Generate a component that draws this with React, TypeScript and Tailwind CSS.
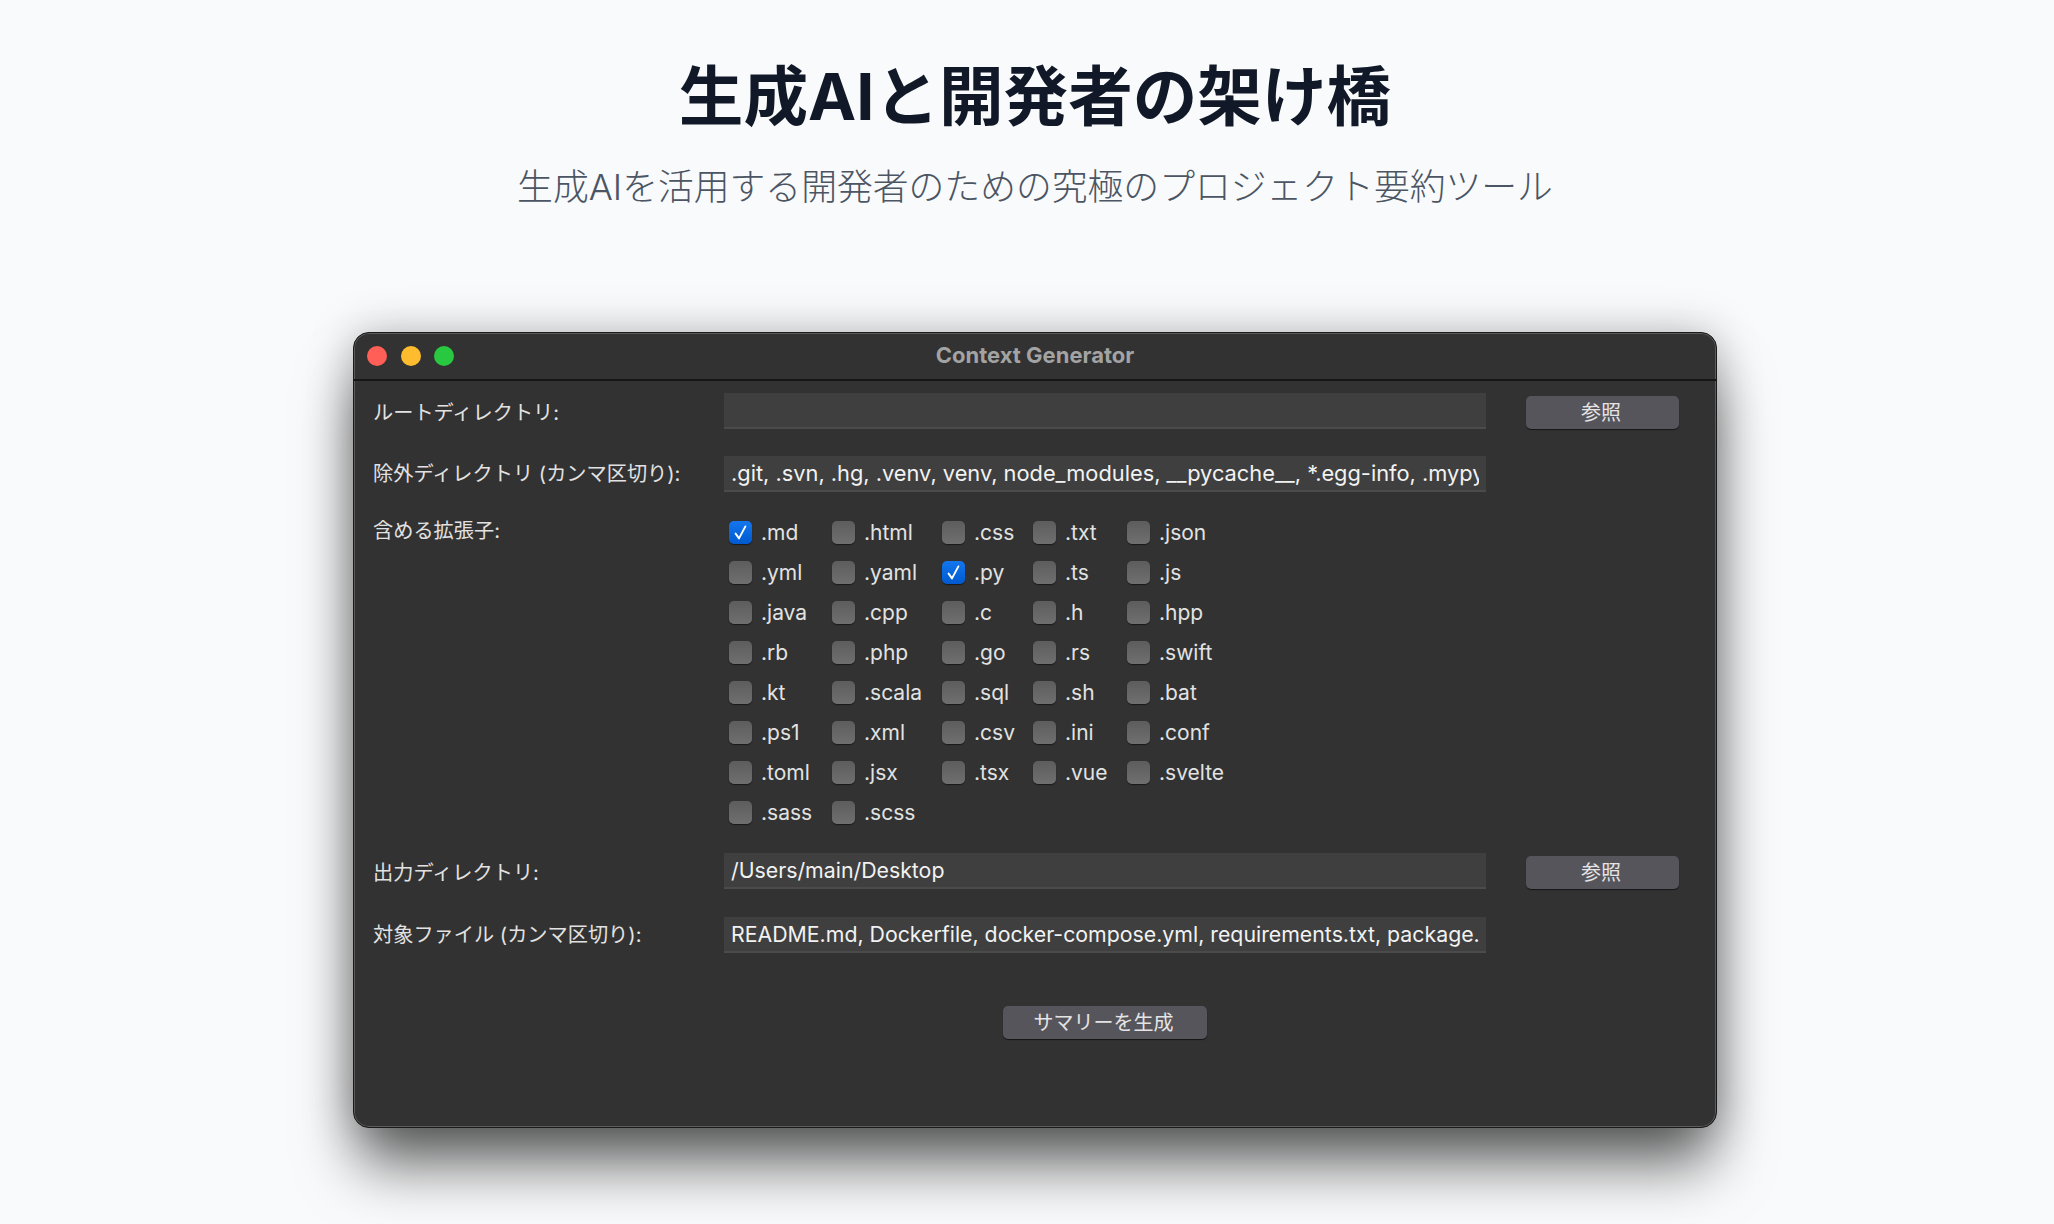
import React from "react";

const rows: string[][] = [
  [".md", ".html", ".css", ".txt", ".json"],
  [".yml", ".yaml", ".py", ".ts", ".js"],
  [".java", ".cpp", ".c", ".h", ".hpp"],
  [".rb", ".php", ".go", ".rs", ".swift"],
  [".kt", ".scala", ".sql", ".sh", ".bat"],
  [".ps1", ".xml", ".csv", ".ini", ".conf"],
  [".toml", ".jsx", ".tsx", ".vue", ".svelte"],
  [".sass", ".scss"],
];
const checked = new Set([".md", ".py"]);

function Check({ label }: { label: string }) {
  const on = checked.has(label);
  return (
    <div className="flex items-center gap-[9px]">
      {on ? (
        <span className="flex h-[23px] w-[23px] items-center justify-center rounded-[5px] bg-gradient-to-b from-[#1477ee] to-[#0059cf] shadow-[0_1px_1px_rgba(0,0,0,0.5)]">
          <svg width="15" height="17" viewBox="0 0 15 17" fill="none">
            <path d="M2.6 9.6 L6 14.4 L12.4 2.4" stroke="white" strokeWidth="1.9" strokeLinecap="round" strokeLinejoin="round" />
          </svg>
        </span>
      ) : (
        <span className="h-[23px] w-[23px] rounded-[5px] bg-gradient-to-b from-[#5d5d5d] to-[#6f6f6f] shadow-[0_1px_1px_rgba(0,0,0,0.5)]" />
      )}
      <span className="pt-px text-[21px] leading-none text-[#e2e2e2]">{label}</span>
    </div>
  );
}

function Field({ value, wide }: { value: string; wide?: boolean }) {
  return (
    <input
      readOnly
      value={value}
      className={
        wide
          ? "h-9 w-[762px] border-b-2 border-[#4b4b4b] bg-[#3f3f3f] px-[7px] pb-px text-[21.8px] text-[#f2f2f2] outline-none"
          : "h-9 w-[762px] border-b-2 border-[#4b4b4b] bg-[#3f3f3f] px-[7px] pb-px text-[21.3px] text-[#f2f2f2] outline-none"
      }
    />
  );
}

function Browse() {
  return (
    <button className="mt-[3px] h-[33px] w-[153px] rounded-[5px] bg-[#57555c] pr-[3px] text-[20px] leading-none text-[#e4e4e4] shadow-[0_1px_1px_rgba(0,0,0,0.6)]">
      参照
    </button>
  );
}

export default function App() {
  return (
    <div className="flex h-[1224px] flex-col items-center overflow-hidden bg-[#f9fafb] pl-4 pt-[57px] font-['Inter','Noto_Sans_CJK_JP',sans-serif]">
      <h1 className="text-[64.6px] font-bold leading-[80px] text-[#111827]">生成AIと開発者の架け橋</h1>
      <p className="mt-[26px] text-[35.8px] font-light leading-[48px] text-[#4b5563]">
        生成AIを活用する開発者のための究極のプロジェクト要約ツール
      </p>

      <div className="mt-[121px] h-[796px] w-[1364px] shrink-0 rounded-[16px] border border-[#1a1a1a] bg-[#323232] shadow-[inset_0_0_0_1px_#5c5c5c,0_42px_60px_-6px_rgba(0,0,0,0.6),0_0_44px_rgba(0,0,0,0.25)]">
        <div className="relative flex h-[48px] items-center justify-center border-b-2 border-[#161616]">
          <div className="absolute left-[13px] top-[13px] flex gap-[13.5px]">
            <span className="h-5 w-5 rounded-full bg-[#ff5f57]" />
            <span className="h-5 w-5 rounded-full bg-[#febc2e]" />
            <span className="h-5 w-5 rounded-full bg-[#28c840]" />
          </div>
          <span className="pb-[2px] text-[22px] font-bold text-[#a3a3a3]">Context Generator</span>
        </div>

        <div className="flex items-start pt-3">
          <div className="h-9 w-[370px] pl-[19px] pt-[2px] text-[20.2px] leading-9 text-[#e2e2e2]">ルートディレクトリ:</div>
          <Field value="" />
          <div className="ml-10">
            <Browse />
          </div>
        </div>

        <div className="mt-[27px] flex items-start">
          <div className="h-9 w-[370px] pl-[19px] text-[20.2px] leading-9 text-[#e2e2e2]">除外ディレクトリ (カンマ区切り):</div>
          <Field wide value=".git, .svn, .hg, .venv, venv, node_modules, __pycache__, *.egg-info, .mypy_cache" />
        </div>

        <div className="mt-5 flex items-start">
          <div className="h-9 w-[370px] pl-[19px] pt-px text-[20.2px] leading-9 text-[#e2e2e2]">含める拡張子:</div>
          <div className="ml-[5px] grid w-fit auto-rows-[40px] grid-cols-[103px_110px_91px_94px_auto] items-center">
            {rows.flat().map((l) => (
              <Check key={l} label={l} />
            ))}
          </div>
        </div>

        <div className="mt-[21px] flex items-start">
          <div className="h-9 w-[370px] pl-[19px] pt-[2px] text-[20.2px] leading-9 text-[#e2e2e2]">出力ディレクトリ:</div>
          <Field value="/Users/main/Desktop" />
          <div className="ml-10">
            <Browse />
          </div>
        </div>

        <div className="mt-7 flex items-start">
          <div className="h-9 w-[370px] pl-[19px] text-[20.2px] leading-9 text-[#e2e2e2]">対象ファイル (カンマ区切り):</div>
          <Field value="README.md, Dockerfile, docker-compose.yml, requirements.txt, package.json" />
        </div>

        <div className="mt-[53px] flex pl-[649px]">
          <button className="h-[33px] w-[204px] rounded-[5px] bg-[#57555c] pr-[3px] text-[20px] leading-none text-[#e4e4e4] shadow-[0_1px_1px_rgba(0,0,0,0.6)]">
            サマリーを生成
          </button>
        </div>
      </div>
    </div>
  );
}
